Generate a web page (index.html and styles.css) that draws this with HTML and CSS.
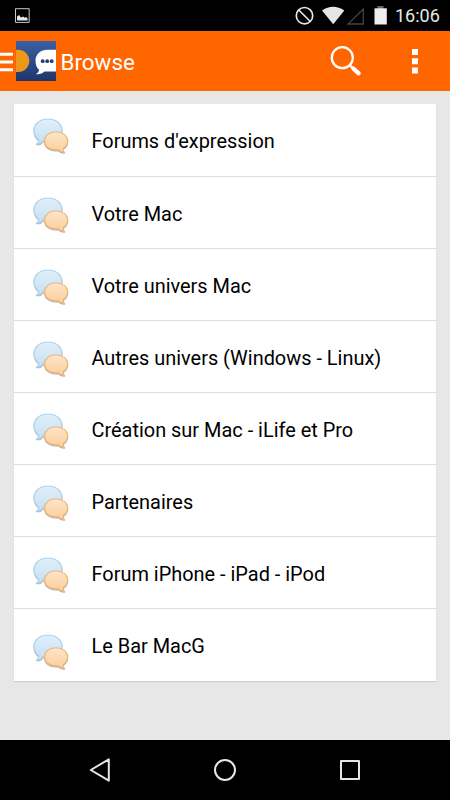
FILE: index.html
```html
<!DOCTYPE html>
<html lang="fr">
<head>
<meta charset="utf-8">
<title>Browse</title>
<link rel="stylesheet" href="styles.css">
</head>
<body>
<svg class="defs" width="0" height="0" aria-hidden="true">
  <defs>
    <linearGradient id="blue" x1="0" y1="0" x2="0" y2="1"><stop offset="0" stop-color="#e2f0fa"/><stop offset="1" stop-color="#c3dff5"/></linearGradient>
    <linearGradient id="peach" x1="0" y1="0" x2="0" y2="1"><stop offset="0" stop-color="#fde5cb"/><stop offset="1" stop-color="#fbcf98"/></linearGradient>
    <linearGradient id="navy" x1="0" y1="0" x2="0" y2="1"><stop offset="0" stop-color="#3b5fa6"/><stop offset="1" stop-color="#20366b"/></linearGradient>
    <symbol id="bubbles" viewBox="0 0 36 36">
      <path d="M15 1C7.400 1 1 5.800 1 12.300c0 4.400 2 7.700 4.800 9.700.2 1.600-.5 2.800-1.800 3.700 2.500.3 4.600-.8 5.800-3 11 2 19.200-3.500 19.200-10.400C29 5.800 22.600 1 15 1z" fill="url(#blue)" stroke="#acd3ef" stroke-width="1.100"/>
      <path d="M23 13.700c-6.500 0-11.500 4-11.500 9.100 0 5.700 5.500 9.800 13.500 8.900 1.600 1.600 3.600 2.600 6.300 2.600-.9-1.200-1.200-2.400-1-3.900 2.800-1.700 4.400-4.300 4.400-7.600 0-5.100-5.200-9.100-11.700-9.100z" fill="url(#peach)" stroke="#edb675" stroke-width="1.100"/>
    </symbol>
  </defs>
</svg>

<header class="status">
  <svg class="status-icons" width="450" height="31" viewBox="0 0 450 31">
    <path d="M15.500 8.700h13.700v13.700H15.500z" fill="none" stroke="#c8c8c8"/>
    <path d="M17 20.500v-4l2-1.500 2 2.500 2.200-1 1.600 1.300 1.400-.8 1.400 1.500v2z" fill="#e6e6e6"/>
    <g fill="none" stroke="#e6e6e6" stroke-width="1.700"><circle cx="304.500" cy="15.700" r="8.200"/><path d="M298.800 10l11.500 11.500"/></g>
    <path d="M322 10.500Q333 3 344.300 10.500L333.200 24.300z" fill="#e6e6e6"/>
    <path d="M363.300 9v15H348z" fill="none" stroke="#444" stroke-width="1.300"/>
    <path d="M377.500 6h6v3h-6z" fill="#666"/>
    <path d="M374.500 8.300h12.300v16.200h-12.300z" fill="#eee"/>
  </svg>
  <span class="clock">16:06</span>
</header>

<div class="bar">
  <svg class="menu" width="13" height="40" viewBox="0 0 13 40"><path d="M0 13.200h13M0 21h13M0 28.800h13" stroke="#fff" stroke-width="3"/></svg>
  <svg class="logo" width="40" height="40" viewBox="0 0 40 40">
    <path d="M0 0h40v40H0z" fill="url(#navy)"/>
    <path d="M0 8.700h2.200a11.100 11.100 0 0 1 0 22.200H0z" fill="#ee9618"/>
    <path d="M40 8.700H31.500c-7 0-12 4.600-12 10.700 0 4.300 1.400 7.600 3.600 9.300-.3 1.800-1.300 3.200-3.200 4.500 4 .3 7-1.100 8.600-2.700H40z" fill="#fff"/>
    <g fill="#243c76"><circle cx="26.700" cy="20.200" r="1.900"/><circle cx="31.200" cy="20.200" r="1.900"/><circle cx="35.700" cy="20.200" r="1.900"/></g>
  </svg>
  <h1 class="title">Browse</h1>
  <svg class="search" width="34" height="34" viewBox="0 0 34 34"><circle cx="13.300" cy="12.700" r="10.500" fill="none" stroke="#fff" stroke-width="2.300"/><path d="M20.500 20l4 4" stroke="#fff" stroke-width="2.200"/><path d="M24.300 23.500l5.300 4.900" stroke="#fff" stroke-width="4.200" stroke-linecap="round"/></svg>
  <svg class="more" width="6" height="28" viewBox="0 0 6 28"><path d="M0 1h6v6H0zM0 10.300h6v6H0zM0 19.500h6v6H0z" fill="#fff"/></svg>
</div>

<main class="content">
  <ul class="list">
    <li class="row first"><svg class="icon"><use href="#bubbles"/></svg><span>Forums d'expression</span></li>
    <li class="row"><svg class="icon"><use href="#bubbles"/></svg><span>Votre Mac</span></li>
    <li class="row"><svg class="icon"><use href="#bubbles"/></svg><span>Votre univers Mac</span></li>
    <li class="row"><svg class="icon"><use href="#bubbles"/></svg><span>Autres univers (Windows - Linux)</span></li>
    <li class="row"><svg class="icon"><use href="#bubbles"/></svg><span>Création sur Mac - iLife et Pro</span></li>
    <li class="row"><svg class="icon"><use href="#bubbles"/></svg><span>Partenaires</span></li>
    <li class="row"><svg class="icon"><use href="#bubbles"/></svg><span>Forum iPhone - iPad - iPod</span></li>
    <li class="row last"><svg class="icon"><use href="#bubbles"/></svg><span>Le Bar MacG</span></li>
  </ul>
</main>

<nav class="nav">
  <svg width="24" height="24" viewBox="0 0 24 24"><path d="M20.800 1.300v21.400L2.800 12z"/></svg>
  <svg width="24" height="24" viewBox="0 0 24 24"><circle cx="12" cy="12" r="10"/></svg>
  <svg width="24" height="24" viewBox="0 0 24 24"><path d="M3 3h18v18H3z"/></svg>
</nav>
</body>
</html>
```

FILE: styles.css
```css
* { box-sizing: border-box; }

body {
  margin: 0;
  width: 450px;
  height: 800px;
  display: flex;
  flex-direction: column;
  overflow: hidden;
  background: #e7e7e7;
  color: #000;
  font-family: Roboto, "Liberation Sans", sans-serif;
}

.defs { position: absolute; }

.status {
  height: 31px;
  flex: none;
  display: flex;
  background: #000;
}

.status-icons { flex: none; }

.clock {
  flex: none;
  width: 56px;
  margin-left: -55px;
  color: #e6e6e6;
  font-size: 18px;
  line-height: 32px;
  white-space: nowrap;
}

.bar {
  height: 60px;
  flex: none;
  display: flex;
  align-items: center;
  background: #ff6600;
}

.menu { margin-right: 2.500px; }

.title {
  margin: 2px 0 0 5px;
  width: 268px;
  color: #fff;
  font-size: 22.400px;
  font-weight: 400;
}

.search { margin-top: 2px; }
.more { margin: 2px 0 0 49.500px; }

.content {
  flex: 1;
  padding: 13px 14px 0;
}

.list {
  margin: 0;
  padding: 0;
  height: 577px;
  display: grid;
  grid-template-rows: 73px repeat(7, 72px);
  list-style: none;
  background: #fff;
  box-shadow: 0 1px 1px #ccc;
}

.row {
  display: flex;
  align-items: center;
  padding-left: 19.400px;
  border-bottom: 1px solid #dedede;
  font-size: 19.930px;
}

.row.last { border-bottom: 0; }

.icon {
  width: 36px;
  height: 36px;
  margin: 5px 22.100px 0 0;
  filter: drop-shadow(0 1px 0.5px rgba(0, 0, 0, 0.3));
}

.row.first .icon { margin-top: -9px; }
.row.last .icon { margin-top: 14px; }
.row span { padding-top: 3px; }

.nav {
  height: 60px;
  flex: none;
  display: flex;
  justify-content: space-between;
  align-items: center;
  padding: 0 88px;
  background: #000;
}

.nav svg {
  fill: none;
  stroke: #e6e6e6;
  stroke-width: 2;
  stroke-linejoin: round;
}
```
